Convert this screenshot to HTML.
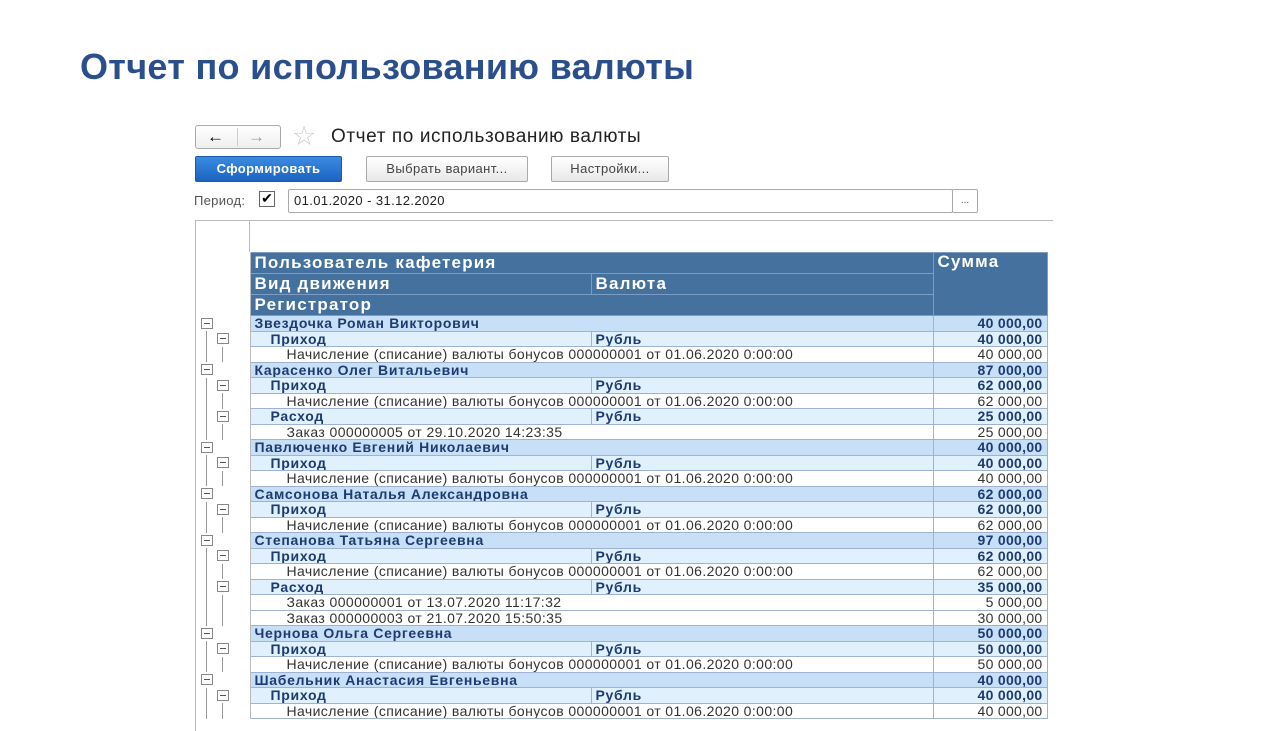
<!DOCTYPE html>
<html><head><meta charset="utf-8"><style>
body{margin:0;width:1280px;height:720px;background:#fff;position:relative;overflow:hidden;font-family:"Liberation Sans",sans-serif}
h1{position:absolute;left:80px;top:46px;margin:0;font-size:36px;color:#2b4f8c;font-weight:bold;letter-spacing:0.3px}
.nav{position:absolute;left:195px;top:125px;width:84px;height:22px;border:1px solid #aaa;border-radius:3px;background:linear-gradient(#fff,#eee)}
.nav span{position:absolute;top:0px;font-size:17px;font-weight:bold;line-height:22px}
.star{position:absolute;left:292px;top:121px;font-size:27px;color:#ccc}
.ttl{position:absolute;left:331px;top:126px;font-size:19px;color:#222;letter-spacing:0.6px}
.btn{position:absolute;top:156px;height:24px;border:1px solid #aaa;border-radius:2px;background:linear-gradient(#fff,#e8e8e8);font-size:13px;color:#444;text-align:center;line-height:24px;letter-spacing:0.4px}
.pb{background:linear-gradient(#3b8be0,#1b63c2);color:#fff;border-color:#1a5aa8;font-weight:bold}
.per{position:absolute;left:194px;top:193px;font-size:13px;color:#555;letter-spacing:0.3px}
.cb{position:absolute;left:259px;top:191px;width:14px;height:14px;border:1px solid #666;font-size:14px;line-height:13px;text-align:center}
.fld{position:absolute;left:288px;top:189px;width:658px;height:22px;border:1px solid #aaa;border-radius:2px;font-size:13px;line-height:22px;padding-left:5px;color:#222;letter-spacing:0.4px}
.dots{position:absolute;left:952px;top:189px;width:24px;height:22px;border:1px solid #aaa;border-radius:2px;font-size:10px;text-align:center;line-height:22px;color:#555}
.frame{position:absolute;left:195px;top:220px;width:857px;height:510px;border-top:1px solid #bbb;border-left:1px solid #bbb}
.vl{position:absolute;left:249px;top:220px;width:1px;height:32px;background:#bbb}
table{position:absolute;left:196px;top:252px;border-collapse:collapse;table-layout:fixed;font-size:14px}
td{padding:0 4px;height:14.5px;line-height:14px;white-space:nowrap;overflow:hidden;border:1px solid #9fb2d4;color:#1d3b70;letter-spacing:0.4px}
tr td.t{border:none;border-right:1px solid #bbb;padding:0;position:relative;background:#fff}
.h td{background:#45719f;color:#fff;font-weight:bold;font-size:17px;height:20px;border-color:#7d9cc4;letter-spacing:1.2px}
.g1 td{background:#c7e0f8;font-weight:bold;letter-spacing:0.7px}
.g2 td{background:#e0f0fd;font-weight:bold;letter-spacing:0.7px}
.d td{background:#fff;color:#333}
.g2 td:nth-child(2){padding-left:20px}
.d td:nth-child(2){padding-left:36px}
td.s{text-align:right;font-weight:bold;letter-spacing:0.3px}
.d td.s{font-weight:normal}
.bx{position:absolute;width:10px;height:9px;border:1px solid #888;background:#fff;top:2px}
.bx:after{content:"";position:absolute;left:2px;right:2px;top:4px;height:1px;background:#555}
.ln{position:absolute;width:1px;background:#999;top:0;bottom:0}
</style></head><body>
<h1>Отчет по использованию валюты</h1>
<div class="nav"><span style="left:11px">←</span><span style="left:52px;color:#999">→</span><div style="position:absolute;left:41px;top:2px;width:1px;height:18px;background:#ccc"></div></div>
<div class="star">☆</div>
<div class="ttl">Отчет по использованию валюты</div>
<div class="btn pb" style="left:195px;width:145px">Сформировать</div>
<div class="btn" style="left:366px;width:160px">Выбрать вариант...</div>
<div class="btn" style="left:551px;width:116px">Настройки...</div>
<div class="per">Период:</div><div class="cb">✔</div>
<div class="fld">01.01.2020 - 31.12.2020</div><div class="dots">...</div>
<div class="frame"></div><div class="vl"></div>
<table>
<colgroup><col style="width:54px"><col style="width:341px"><col style="width:342px"><col style="width:114px"></colgroup>
<tr class="h"><td class="t"></td><td colspan="2">Пользователь кафетерия</td><td rowspan="3" style="vertical-align:top;padding-top:2px">Сумма</td></tr>
<tr class="h"><td class="t"></td><td>Вид движения</td><td>Валюта</td></tr>
<tr class="h"><td class="t"></td><td colspan="2">Регистратор</td></tr>
<tr class="g1"><td class="t"><i class="bx" style="left:5px"></i></td><td colspan="2">Звездочка Роман Викторович</td><td class="s">40 000,00</td></tr>
<tr class="g2"><td class="t"><i class="ln" style="left:10px"></i><i class="bx" style="left:21px"></i></td><td>Приход</td><td>Рубль</td><td class="s">40 000,00</td></tr>
<tr class="d"><td class="t"><i class="ln" style="left:10px"></i><i class="ln" style="left:26px"></i></td><td colspan="2">Начисление (списание) валюты бонусов 000000001 от 01.06.2020 0:00:00</td><td class="s">40 000,00</td></tr>
<tr class="g1"><td class="t"><i class="bx" style="left:5px"></i></td><td colspan="2">Карасенко Олег Витальевич</td><td class="s">87 000,00</td></tr>
<tr class="g2"><td class="t"><i class="ln" style="left:10px"></i><i class="bx" style="left:21px"></i></td><td>Приход</td><td>Рубль</td><td class="s">62 000,00</td></tr>
<tr class="d"><td class="t"><i class="ln" style="left:10px"></i><i class="ln" style="left:26px"></i></td><td colspan="2">Начисление (списание) валюты бонусов 000000001 от 01.06.2020 0:00:00</td><td class="s">62 000,00</td></tr>
<tr class="g2"><td class="t"><i class="ln" style="left:10px"></i><i class="bx" style="left:21px"></i></td><td>Расход</td><td>Рубль</td><td class="s">25 000,00</td></tr>
<tr class="d"><td class="t"><i class="ln" style="left:10px"></i><i class="ln" style="left:26px"></i></td><td colspan="2">Заказ 000000005 от 29.10.2020 14:23:35</td><td class="s">25 000,00</td></tr>
<tr class="g1"><td class="t"><i class="bx" style="left:5px"></i></td><td colspan="2">Павлюченко Евгений Николаевич</td><td class="s">40 000,00</td></tr>
<tr class="g2"><td class="t"><i class="ln" style="left:10px"></i><i class="bx" style="left:21px"></i></td><td>Приход</td><td>Рубль</td><td class="s">40 000,00</td></tr>
<tr class="d"><td class="t"><i class="ln" style="left:10px"></i><i class="ln" style="left:26px"></i></td><td colspan="2">Начисление (списание) валюты бонусов 000000001 от 01.06.2020 0:00:00</td><td class="s">40 000,00</td></tr>
<tr class="g1"><td class="t"><i class="bx" style="left:5px"></i></td><td colspan="2">Самсонова Наталья Александровна</td><td class="s">62 000,00</td></tr>
<tr class="g2"><td class="t"><i class="ln" style="left:10px"></i><i class="bx" style="left:21px"></i></td><td>Приход</td><td>Рубль</td><td class="s">62 000,00</td></tr>
<tr class="d"><td class="t"><i class="ln" style="left:10px"></i><i class="ln" style="left:26px"></i></td><td colspan="2">Начисление (списание) валюты бонусов 000000001 от 01.06.2020 0:00:00</td><td class="s">62 000,00</td></tr>
<tr class="g1"><td class="t"><i class="bx" style="left:5px"></i></td><td colspan="2">Степанова Татьяна Сергеевна</td><td class="s">97 000,00</td></tr>
<tr class="g2"><td class="t"><i class="ln" style="left:10px"></i><i class="bx" style="left:21px"></i></td><td>Приход</td><td>Рубль</td><td class="s">62 000,00</td></tr>
<tr class="d"><td class="t"><i class="ln" style="left:10px"></i><i class="ln" style="left:26px"></i></td><td colspan="2">Начисление (списание) валюты бонусов 000000001 от 01.06.2020 0:00:00</td><td class="s">62 000,00</td></tr>
<tr class="g2"><td class="t"><i class="ln" style="left:10px"></i><i class="bx" style="left:21px"></i></td><td>Расход</td><td>Рубль</td><td class="s">35 000,00</td></tr>
<tr class="d"><td class="t"><i class="ln" style="left:10px"></i><i class="ln" style="left:26px"></i></td><td colspan="2">Заказ 000000001 от 13.07.2020 11:17:32</td><td class="s">5 000,00</td></tr>
<tr class="d"><td class="t"><i class="ln" style="left:10px"></i><i class="ln" style="left:26px"></i></td><td colspan="2">Заказ 000000003 от 21.07.2020 15:50:35</td><td class="s">30 000,00</td></tr>
<tr class="g1"><td class="t"><i class="bx" style="left:5px"></i></td><td colspan="2">Чернова Ольга Сергеевна</td><td class="s">50 000,00</td></tr>
<tr class="g2"><td class="t"><i class="ln" style="left:10px"></i><i class="bx" style="left:21px"></i></td><td>Приход</td><td>Рубль</td><td class="s">50 000,00</td></tr>
<tr class="d"><td class="t"><i class="ln" style="left:10px"></i><i class="ln" style="left:26px"></i></td><td colspan="2">Начисление (списание) валюты бонусов 000000001 от 01.06.2020 0:00:00</td><td class="s">50 000,00</td></tr>
<tr class="g1"><td class="t"><i class="bx" style="left:5px"></i></td><td colspan="2">Шабельник Анастасия Евгеньевна</td><td class="s">40 000,00</td></tr>
<tr class="g2"><td class="t"><i class="ln" style="left:10px"></i><i class="bx" style="left:21px"></i></td><td>Приход</td><td>Рубль</td><td class="s">40 000,00</td></tr>
<tr class="d"><td class="t"><i class="ln" style="left:10px"></i><i class="ln" style="left:26px"></i></td><td colspan="2">Начисление (списание) валюты бонусов 000000001 от 01.06.2020 0:00:00</td><td class="s">40 000,00</td></tr>
</table>
</body></html>
